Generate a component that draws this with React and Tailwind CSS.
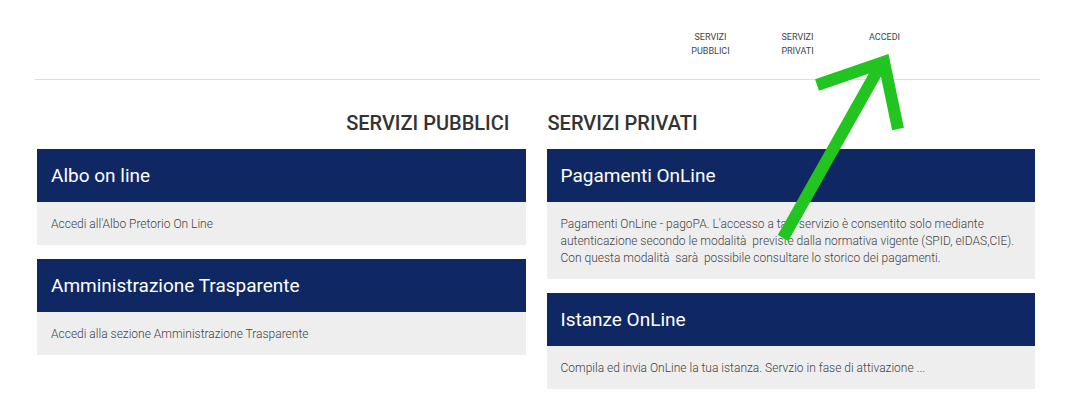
import React from 'react';

const Card = ({ title, children }) => (
  <div className="flex flex-col">
    <div className="flex h-[53px] items-center bg-[#0f2863] px-[14px] pt-[2px] text-[19px] text-white">{title}</div>
    <div className="bg-[#eeeeee] px-[14px] pb-[12px] pt-[14px] text-[12px] font-light leading-[17px] text-[#444444]">{children}</div>
  </div>
);

export default function App() {
  return (
    <div className="relative min-h-[414px] w-full bg-white font-['Roboto','Liberation_Sans',sans-serif]">
      {/* Top nav */}
      <div className="ml-[35px] mr-[32px] flex h-[80px] justify-end border-b border-[#dddddd] pr-[112px] pt-[30px]">
        <div className="flex text-[9px] leading-[14px] text-[#444444]">
          <a className="w-[87px] text-center">SERVIZI<br />PUBBLICI</a>
          <a className="w-[87px] text-center">SERVIZI<br />PRIVATI</a>
          <a className="w-[87px] text-center">ACCEDI</a>
        </div>
      </div>

      {/* Services */}
      <div className="grid grid-cols-2 gap-[21px] px-[37px] pt-[31px]">
        <div className="flex flex-col gap-[14px]">
          <h2 className="pr-[16px] text-right text-[20px] font-medium leading-[24px] text-[#333333]">SERVIZI PUBBLICI</h2>
          <Card title="Albo on line">Accedi all'Albo Pretorio On Line</Card>
          <Card title="Amministrazione Trasparente">Accedi alla sezione Amministrazione Trasparente</Card>
        </div>
        <div className="flex flex-col gap-[14px]">
          <h2 className="pl-[1px] text-[20px] font-medium leading-[24px] text-[#333333]">SERVIZI PRIVATI</h2>
          <Card title="Pagamenti OnLine">
            Pagamenti OnLine - pagoPA. L'accesso a tale servizio è consentito solo mediante
            <br />
            autenticazione secondo le modalità&nbsp; previste dalla normativa vigente (SPID, eIDAS,CIE).
            <br />
            Con questa modalità&nbsp; sarà&nbsp; possibile consultare lo storico dei pagamenti.
          </Card>
          <Card title="Istanze OnLine">Compila ed invia OnLine la tua istanza. Servzio in fase di attivazione ...</Card>
        </div>
      </div>

      {/* Annotation arrow */}
      <svg className="pointer-events-none absolute left-0 top-0" width="1072" height="414" viewBox="0 0 1072 414">
        <g stroke="#22c41f" strokeWidth="12" fill="none" strokeLinecap="butt" strokeLinejoin="miter">
          <line x1="783" y1="238" x2="880" y2="66" />
          <polyline points="817,85 884,62 898,129" />
        </g>
      </svg>
    </div>
  );
}
